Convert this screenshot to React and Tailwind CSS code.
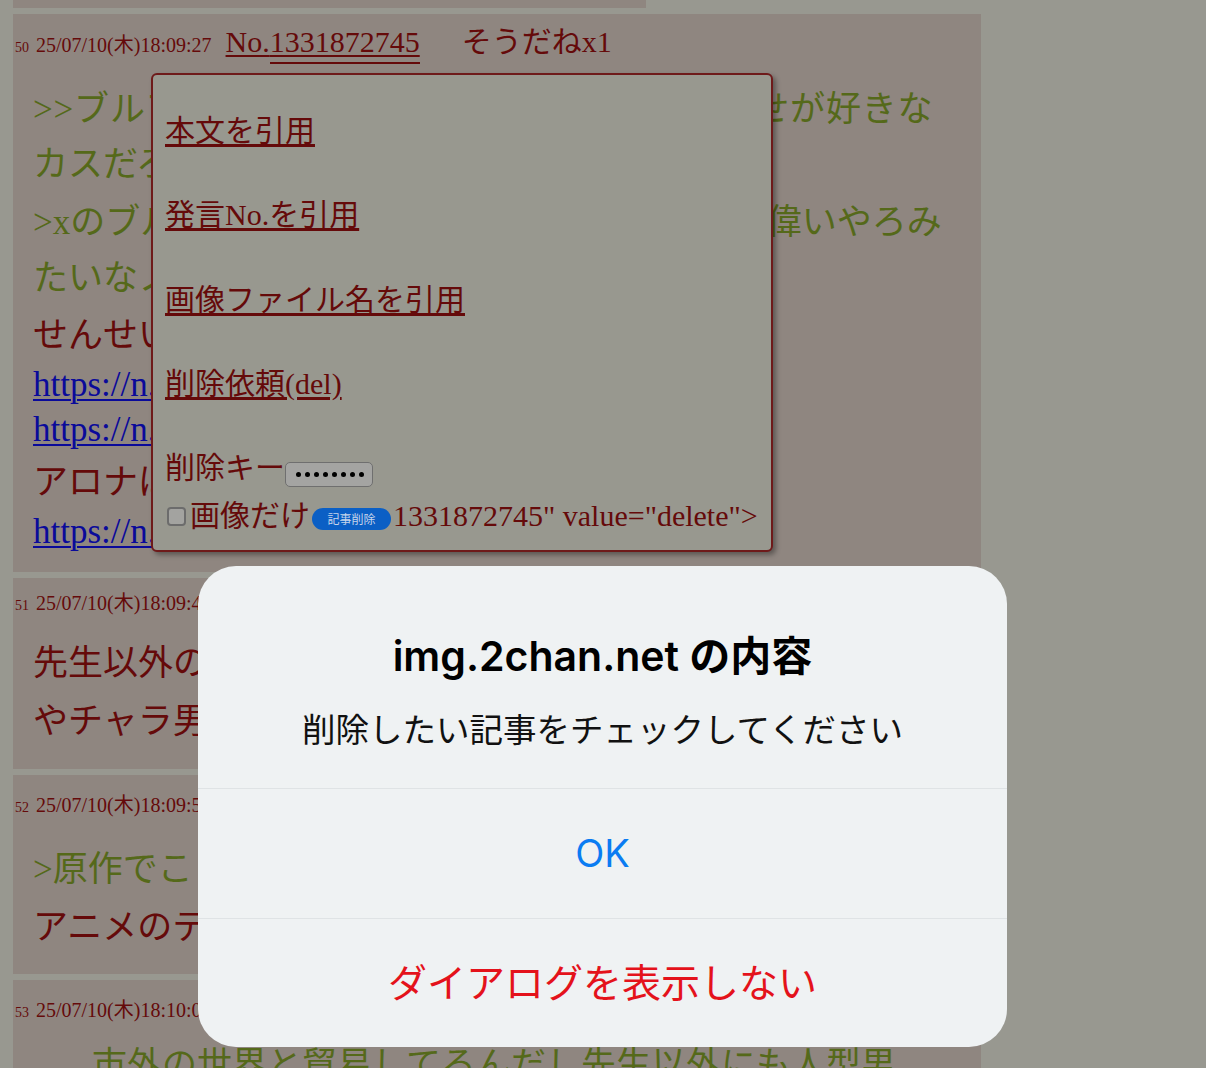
const ResHeader = ({ num, date, no, sod }) => (
  <div className="flex items-baseline whitespace-nowrap leading-none">
    <span className="pl-[2px] text-[14px]">{num}</span>
    <span className="ml-[7px] text-[20px]">{date}</span>
    <a className="ml-[14px] text-[30px] underline decoration-[1.5px] underline-offset-[3px]">
      No.
      <span className="border-b-2 border-[#650a0a] pb-[4px]">{no}</span>
    </a>
    {sod && <span className="ml-[42px] text-[30px]">{sod}</span>}
  </div>
)

const Link = ({ children }) => (
  <a className="text-[#0a0a9a] underline decoration-[2px] underline-offset-[3px]">{children}</a>
)

const Reply50 = () => (
  <div className="h-[558px] w-[968px] overflow-hidden bg-[#8f8680]">
    <div className="h-[74px] pt-[13px]">
      <ResHeader num="50" date="25/07/10(木)18:09:27" no="1331872745" sod="そうだねx1" />
    </div>
    <div className="whitespace-nowrap pl-[20px] text-[35px] leading-[44px]">
      <div className="h-[55px] tracking-[0.8px] text-[#55691a]">{">>ブルアカの生徒たちは先生に何でもおまかせが好きな"}</div>
      <div className="h-[58px] text-[#55691a]">カスだろって言われてた</div>
      <div className="h-[56px] text-[#55691a]">{">xのブルアカ先生は生徒にとって誰よりも一番偉いやろみ"}</div>
      <div className="h-[57px] text-[#55691a]">たいなノリのキャラ付け</div>
      <div className="h-[49px]">せんせいが鈍感なのもいい</div>
      <div className="h-[45px]">
        <Link>https://n.futaba.net/img/1752138</Link>
      </div>
      <div className="h-[53px]">
        <Link>https://n.futaba.net/img/1752139</Link>
      </div>
      <div className="h-[49px]">アロナは別枠</div>
      <div className="h-[44px]">
        <Link>https://n.futaba.net/img/1752140</Link>
      </div>
    </div>
  </div>
)

const Reply51 = () => (
  <div className="h-[191px] w-[968px] overflow-hidden bg-[#8f8680]">
    <div className="h-[64px] pt-[7px]">
      <ResHeader num="51" date="25/07/10(木)18:09:45" no="1331872781" />
    </div>
    <div className="whitespace-nowrap pl-[20px] text-[35px] leading-[44px]">
      <div className="h-[58px]">先生以外の男キャラが出てこない</div>
      <div className="h-[44px]">やチャラ男が出てこないのがいい</div>
    </div>
  </div>
)

const Reply52 = () => (
  <div className="h-[199px] w-[968px] overflow-hidden bg-[#8f8680]">
    <div className="h-[73px] pt-[12px]">
      <ResHeader num="52" date="25/07/10(木)18:09:58" no="1331872803" />
    </div>
    <div className="whitespace-nowrap pl-[20px] text-[35px] leading-[44px]">
      <div className="h-[58px] text-[#55691a]">{">原作でこういうのないよね"}</div>
      <div className="h-[44px]">アニメのテコ入れかな</div>
    </div>
  </div>
)

const Reply53 = () => (
  <div className="h-[120px] w-[968px] overflow-hidden bg-[#8f8680]">
    <div className="h-[64px] pt-[12px]">
      <ResHeader num="53" date="25/07/10(木)18:10:03" no="1331872827" />
    </div>
    <div className="whitespace-nowrap pl-[79px] text-[35px] leading-[44px] text-[#55691a]">
      <div className="h-[44px]">市外の世界と貿易してるんだし先生以外にも人型男</div>
    </div>
  </div>
)

const QuoteMenu = () => (
  <div className="absolute left-[151px] top-[73px] h-[479px] w-[622px] rounded-[6px] border-2 border-[#6e1a1a] bg-[#98988f] pl-[12px] pt-[41px] text-[30px] leading-[30px] text-[#650a0a] shadow-[3px_3px_5px_rgba(0,0,0,0.35)]">
    <div className="h-[84px]">
      <a className="underline underline-offset-[3px]">本文を引用</a>
    </div>
    <div className="h-[85px]">
      <a className="underline underline-offset-[3px]">発言No.を引用</a>
    </div>
    <div className="h-[84px]">
      <a className="underline underline-offset-[3px]">画像ファイル名を引用</a>
    </div>
    <div className="h-[84px]">
      <a className="underline underline-offset-[3px]">削除依頼(del)</a>
    </div>
    <div className="flex h-[48px] items-start whitespace-nowrap">
      <span>削除キー</span>
      <span className="mt-[9px] flex h-[25px] w-[88px] items-center gap-[4px] rounded-[5px] border border-[#6f6f6f] bg-[#a4a4a2] pl-[10px]">
        {Array.from({ length: 8 }).map((_, i) => (
          <span key={i} className="h-[5px] w-[5px] rounded-full bg-black" />
        ))}
      </span>
    </div>
    <div className="flex h-[30px] items-start whitespace-nowrap">
      <span className="ml-[2px] mt-[6px] h-[19px] w-[19px] rounded-[4px] border-2 border-[#6c6c6c] bg-[#a3a3a0]" />
      <span className="ml-[4px]">画像だけ</span>
      <span className="ml-[2px] mt-[7px] flex h-[22px] w-[79px] items-center justify-center rounded-full bg-[#0b5fc5] font-['Noto_Sans_CJK_JP',sans-serif] text-[12px] leading-none text-[#c6d5ea]">
        記事削除
      </span>
      <span className="ml-[2px]">{'1331872745" value="delete">'}</span>
    </div>
  </div>
)

const Alert = () => (
  <div className="absolute left-[198px] top-[566px] flex h-[481px] w-[809px] flex-col overflow-hidden rounded-[38px] bg-[#eff2f3] font-['Inter','Noto_Sans_CJK_JP',sans-serif]">
    <div className="h-[222px] pt-[66px] text-center">
      <div className="h-[48px] text-[41px] font-semibold leading-[48px] text-black">img.2chan.net の内容</div>
      <div className="mt-[30px] h-[40px] text-[33.5px] leading-[40px] text-[#111]">
        削除したい記事をチェックしてください
      </div>
    </div>
    <div className="flex h-[130px] items-center justify-center border-t border-[#dfe3e5] text-[38px] text-[#0a7cf2]">
      OK
    </div>
    <div className="flex flex-1 items-center justify-center border-t border-[#dfe3e5] text-[39px] text-[#e4121b]">
      ダイアログを表示しない
    </div>
  </div>
)

export default function App() {
  return (
    <div className="relative h-[1068px] w-[1206px] overflow-hidden bg-[#989890] font-['Liberation_Serif','Noto_Sans_CJK_JP',serif] text-[#650a0a]">
      <div className="flex flex-col gap-[6px] pl-[13px]">
        <div className="h-[8px] w-[633px] bg-[#8f8680]" />
        <Reply50 />
        <Reply51 />
        <Reply52 />
        <Reply53 />
      </div>
      <QuoteMenu />
      <Alert />
    </div>
  )
}
